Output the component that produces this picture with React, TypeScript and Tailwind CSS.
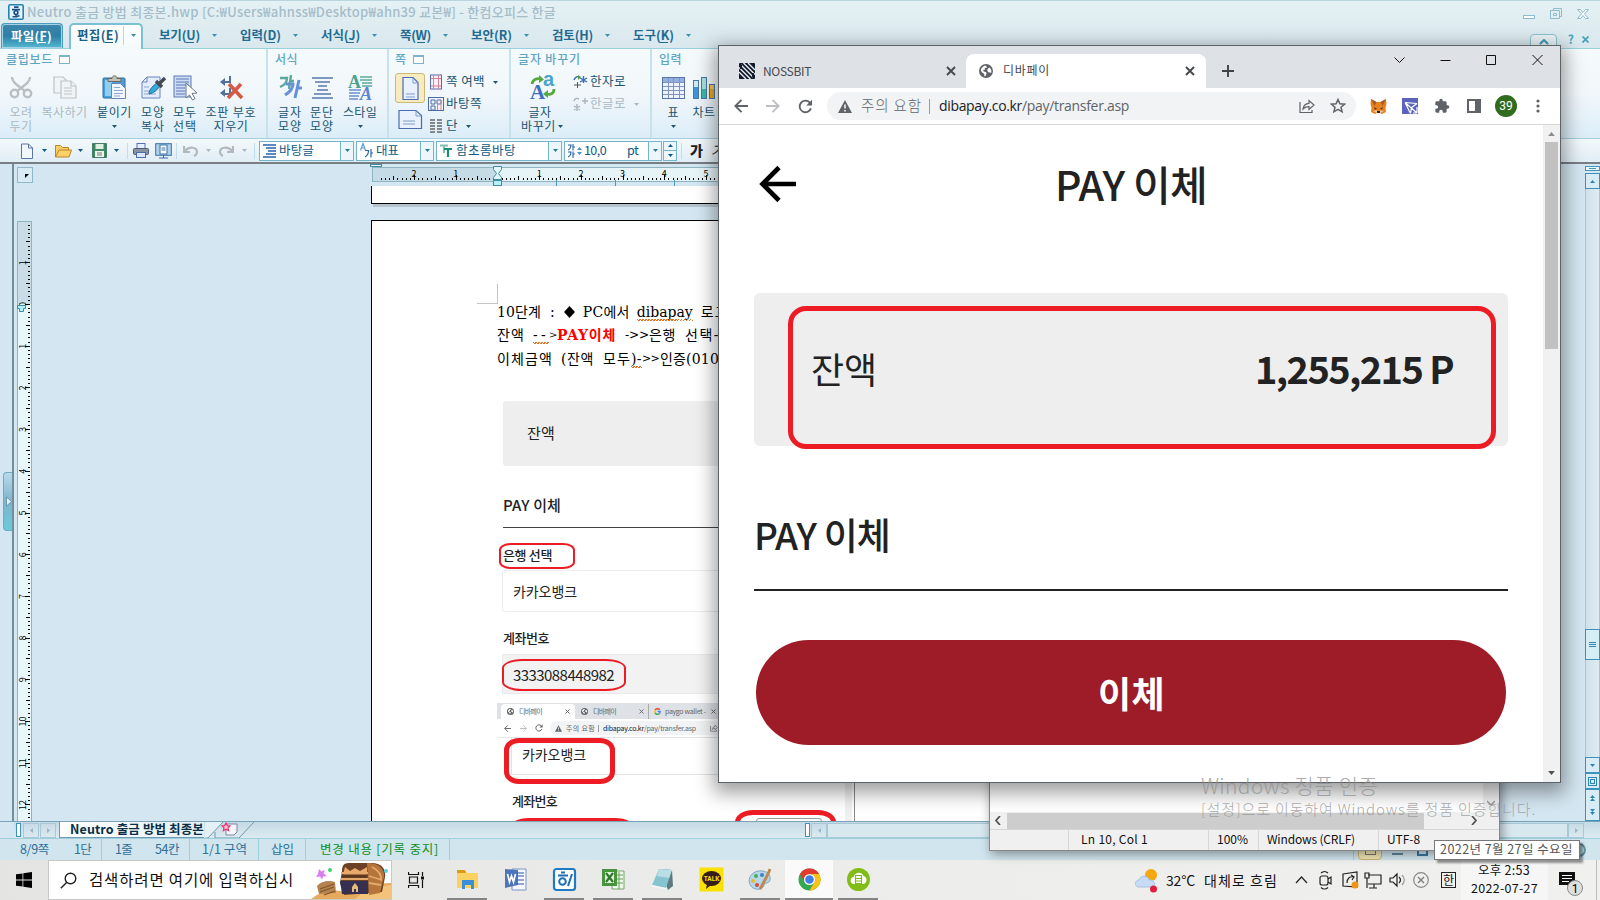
import { useLayoutEffect, useRef, type ReactNode } from "react";

/* Text spread over an exact width by adjusting its tracking. */
function Fit({ w, children, className = "" }: { w: number; children: string; className?: string }) {
  const ref = useRef<HTMLSpanElement>(null);
  useLayoutEffect(() => {
    const el = ref.current;
    if (!el) return;
    el.style.letterSpacing = "0px";
    const natural = el.getBoundingClientRect().width;
    el.style.letterSpacing = `${(w - natural) / Math.max(1, children.length)}px`;
  }, [w, children]);
  return (
    <span className={`block shrink-0 whitespace-pre ${className}`} style={{ width: w }}>
      <span ref={ref} className="inline-block whitespace-pre">{children}</span>
    </span>
  );
}

function Down({ className = "" }: { className?: string }) {
  return (
    <svg className={`h-[3px] w-[5px] shrink-0 ${className}`} viewBox="0 0 5 3" fill="currentColor">
      <path d="M0 0h5L2.5 3z" />
    </svg>
  );
}

function Gap({ className }: { className: string }) {
  return <div className={`shrink-0 ${className}`} />;
}

function HwpLogo({ className = "" }: { className?: string }) {
  return (
    <svg className={className} viewBox="0 0 16 16">
      <rect x="0.8" y="0.8" width="14.4" height="14.4" rx="1.5" fill="#e6f5fb" stroke="#2580b4" strokeWidth="1.6" />
      <path d="M6 3.200h4.500M4 5.600h8" stroke="#1a4f8c" strokeWidth="1.700" />
      <circle cx="8" cy="8.600" r="1.900" fill="none" stroke="#1a4f8c" strokeWidth="1.600" />
      <path d="M8 10.500v2M4.500 12.800h4l3-1.300" stroke="#1a4f8c" strokeWidth="1.500" fill="none" />
    </svg>
  );
}

const menus = [
  { t: "보기(U)", w: 41, cell: "w-[81px]" },
  { t: "입력(D)", w: 41, cell: "w-[81px]" },
  { t: "서식(J)", w: 39, cell: "w-[79px]" },
  { t: "쪽(W)", w: 31, cell: "w-[71px]" },
  { t: "보안(R)", w: 41, cell: "w-[81px]" },
  { t: "검토(H)", w: 41, cell: "w-[81px]" },
  { t: "도구(K)", w: 41, cell: "w-[81px]" },
];

function MenuText({ t, w, className = "" }: { t: string; w: number; className?: string }) {
  return (
    <span className={`relative block shrink-0 text-[12.5px] font-bold ${className}`}>
      <Fit w={w}>{t}</Fit>
      <span className="absolute right-[6px] bottom-[-1px] h-px w-[8px] bg-current" />
    </span>
  );
}

function TitleBar() {
  return (
    <div className="flex h-[23px] shrink-0 items-center border-t border-[#b9d6e0] bg-gradient-to-b from-[#e4f1f5] to-[#dfedf1] pl-[8px] leading-none">
      <HwpLogo className="size-[16px] shrink-0" />
      <Fit w={529} className="mb-[2px] ml-[3px] text-[13px] font-medium text-[#a5bdc9]">
        Neutro 출금 방법 최종본.hwp [C:₩Users₩ahnss₩Desktop₩ahn39 교본₩] - 한컴오피스 한글
      </Fit>
      <svg className="mt-[6px] mr-[11px] ml-auto h-[14px] w-[66px]" viewBox="0 0 66 14" fill="none" stroke="#8fbccc" strokeWidth="1">
        <rect x="0.5" y="7.5" width="11" height="3" fill="#fff" />
        <path d="M30.500 2.500v-2h8v8h-2M27.500 2.500h9v8h-9zM30.500 5.500h3v2h-3z" />
        <path d="M54.500 1.500h3l2.500 3 2.500-3h3l-4 4.500 4 4.500h-3l-2.500-3-2.500 3h-3l4-4.500z" fill="#fff" />
      </svg>
    </div>
  );
}

function MenuBar() {
  return (
    <div className="flex h-[26px] shrink-0 items-stretch border-b border-[#9bd0e0] bg-gradient-to-b from-[#dfedf1] to-[#d9e8ee] leading-none">
      <div className="ml-px flex w-[62px] items-center rounded-t-[4px] border border-b-0 border-[#4c9dbd] bg-gradient-to-b from-[#3f86ab] via-[#2b7fa8] to-[#57b9d2] pl-[9px] shadow-[inset_0_0_0_1px_#a3d3e4]">
        <MenuText t="파일(F)" w={41} className="text-white" />
      </div>
      <div className="-mb-px ml-[6px] flex w-[74px] items-center rounded-t-[5px] border-2 border-b-0 border-[#7cc0d4] bg-gradient-to-b from-white to-[#f3fafc] pb-[3px] pl-[6px] text-[#1c5f86]">
        <MenuText t="편집(E)" w={42} />
        <div className="ml-[4px] h-[19px] w-px bg-[#b5d9e5]" />
        <Down className="ml-[7px] text-[#3e8fae]" />
      </div>
      <Gap className="w-[16px]" />
      {menus.map((m) => (
        <div key={m.t} className={`flex items-center ${m.cell} text-[#236a92]`}>
          <MenuText t={m.t} w={m.w} />
          <Down className="ml-[12px] text-[#3e8fae]" />
        </div>
      ))}
      <div className="mt-[11px] ml-auto h-[18px] w-[27px] rounded-t-[4px] border border-[#8cc0cf] bg-[#e9f4f7] px-[8px] pt-[4px]">
        <svg className="h-[6px] w-[10px]" viewBox="0 0 10 6"><path d="M1 5l4-4 4 4" fill="none" stroke="#3e9ab5" strokeWidth="2" /></svg>
      </div>
      <span className="mt-[10px] ml-[11px] text-[12px] font-bold text-[#4aa3bd]">?</span>
      <svg className="mt-[13px] mr-[11px] ml-[8px] size-[7px]" viewBox="0 0 7 7"><path d="M.5.500l6 6M6.500.500l-6 6" stroke="#4aa3bd" strokeWidth="1.800" /></svg>
    </div>
  );
}

/* ---------- ribbon ---------- */

const page = (c: string, f: string) => (
  <path d="M5 1.500h10l5 5v17H5z" fill={f} stroke={c} strokeWidth="1.200" />
);

const icons: Record<string, ReactNode> = {
  cut: (
    <g fill="none" stroke="#b9bfc2" strokeWidth="2.400">
      <path d="M3 2c0 5 5 8 13 14M21 2c0 5-5 8-13 14" />
      <circle cx="5.500" cy="18.500" r="3.700" /><circle cx="18.500" cy="18.500" r="3.700" />
    </g>
  ),
  copy: (
    <g fill="#f1f4f6" stroke="#bcc3c7" strokeWidth="1.200">
      <path d="M2 2h9l3 3v13H2z" /><path d="M9 6h10l5 5v12H9z" />
      <path d="M12 13h8M12 16h8M12 19h8M19 6v5h5" />
    </g>
  ),
  paste: (
    <g>
      <rect x="1" y="3" width="22" height="20" rx="1" fill="#4a9fd6" stroke="#2b6fa6" />
      <rect x="3" y="5" width="7" height="16" fill="#8fd0f2" />
      <path d="M6 6.500V3.500h4c0-3.500 5-3.500 5 0h4v3z" fill="#c5c0b6" stroke="#6c675d" />
      <path d="M9.500 8.500h9l5 5v10h-14z" fill="#f2f7ff" stroke="#6d83b5" />
      <path d="M12 12.500h6M12 15.500h9M12 18.500h9M12 21h6" stroke="#8fa5cf" />
    </g>
  ),
  brush: (
    <g>
      <path d="M6 2h13v21H1V7z" fill="#e3edfb" stroke="#6a83bd" /><path d="M6 2v5H1" fill="none" stroke="#6a83bd" />
      <path d="M3 19h12M3 16h6M3 12h5" stroke="#8fa5cf" />
      <path d="M8 19c0-5 5-9 8-11l3 3c-3 4-6 7-11 8z" fill="#36a9da" stroke="#1c6c9c" />
      <path d="M15 6l6 6M18 9l6-6" stroke="#444b52" strokeWidth="3.400" />
    </g>
  ),
  select: (
    <g>
      <rect x="1" y="1" width="17" height="21" fill="#cddbf3" stroke="#5d78b6" />
      <path d="M3 4h13M3 7h13M3 10h13M3 13h9M3 16h9M3 19h9" stroke="#5d78b6" />
      <path d="M13 8l11 10-5 .5 3 5-2.500 1.500-3-5-3.500 3z" fill="#fff" stroke="#6b7688" />
    </g>
  ),
  marks: (
    <g fill="none">
      <path d="M11 1v6H4M11 13v6H4" stroke="#52709f" strokeWidth="2" />
      <path d="M6 3L1 7l5 4zM6 14l-5 4 5 4z" fill="#52709f" />
      <path d="M10 9l13 14M22 9L9 23" stroke="#d55a45" strokeWidth="3.600" />
    </g>
  ),
  charshape: (
    <g fill="none">
      <path d="M2 3h7c0 4-2 7-7 9M13 0l-2 14M12 6h4" stroke="#5ba99b" strokeWidth="2.400" />
      <path d="M8 9h7c0 5-3 8-8 11M21 5l-4 18M20 13h4" stroke="#6792d8" strokeWidth="3" />
    </g>
  ),
  para: <path d="M2 3h21M5 7h15M8 11h9M7 15h11M4 19h17M2 23h21" stroke="#5878ac" strokeWidth="1.500" />,
  style: (
    <g>
      <path d="M12 2h12M12 5h12M14 8h10M14 11h10" stroke="#5ba99b" strokeWidth="1.300" />
      <path d="M1 15h12M1 18h11M1 21h10M1 24h9" stroke="#6a8fd0" strokeWidth="1.300" />
      <g fontWeight="bold" fontFamily="Liberation Serif"><text x="0" y="13" fontSize="18" fill="#4da08e">A</text><text x="12" y="25" fontSize="18" fill="#5c83d0" fontStyle="italic">A</text></g>
    </g>
  ),
  change: (
    <g>
      <text x="13" y="11" fontSize="20" fontWeight="bold" fontFamily="Liberation Sans" fill="#4aa6cd">a</text>
      <text x="0" y="24" fontSize="21" fontWeight="bold" fontFamily="Liberation Serif" fill="#3c6fc0">A</text>
      <path d="M2 9c1-5 5-6 9-5M24 14c0 5-4 6-7 5" fill="none" stroke="#58a942" strokeWidth="2.800" />
      <path d="M9 0l5 4.500L9 8zM18 15v8l-5-4z" fill="#58a942" />
    </g>
  ),
  table: (
    <g>
      <rect x="1.500" y="2.500" width="22" height="21" fill="#eef3fb" stroke="#5a74a8" />
      <rect x="2" y="3" width="21" height="4" fill="#91afe0" />
      <path d="M2 7.500h21M2 11.500h21M2 15.500h21M2 19.500h21M7.500 3v20M12.500 3v20M18.500 3v20" stroke="#7f94bf" />
    </g>
  ),
  chart: (
    <g strokeWidth="1" stroke="#4a78a8">
      <rect x="1.500" y="5.500" width="5" height="18" fill="#cfeaf8" /><rect x="2" y="12" width="4" height="11" fill="#3f95d8" stroke="none" />
      <rect x="9.500" y="2.500" width="5" height="21" fill="#a8e0da" /><rect x="10" y="14" width="4" height="9" fill="#3bbba6" stroke="none" />
      <rect x="17.500" y="9.500" width="5" height="14" fill="#f6c95a" /><rect x="18" y="14" width="4" height="9" fill="#eba81c" stroke="none" />
    </g>
  ),
};

function Ico({ name, className = "size-[25px]" }: { name: string; className?: string }) {
  return <svg className={`shrink-0 overflow-visible ${className}`} viewBox="0 0 25 25">{icons[name]}</svg>;
}

function Col({ name, l1, w1, l2, w2 = 0, cell, dim }: { name: string; l1: string; w1: number; l2?: string; w2?: number; cell: string; dim?: boolean }) {
  return (
    <div className={`flex shrink-0 flex-col items-center text-[12px] leading-[14px] ${cell} ${dim ? "text-[#a9bac3]" : "text-[#205470]"}`}>
      <Ico name={name} />
      <Fit w={w1} className="mt-[5px]">{l1}</Fit>
      {l2 ? <Fit w={w2}>{l2}</Fit> : dim ? null : <Down className="mt-[6px]" />}
    </div>
  );
}

function WinGlyph() {
  return <span className="ml-[6px] block h-[9px] w-[11px] border border-t-2 border-[#7ab3cb] bg-white" />;
}

function Group({ title, w, win, cell, children }: { title: string; w: number; win?: boolean; cell: string; children: ReactNode }) {
  return (
    <div className={`flex shrink-0 flex-col border-r-2 border-[#c8e2ec] leading-none ${cell}`}>
      <div className="flex h-[20px] items-center text-[12px] font-medium text-[#5fa6c3]">
        <Fit w={w}>{title}</Fit>
        {win && <WinGlyph />}
      </div>
      <div className="flex pt-[6px]">{children}</div>
    </div>
  );
}

function Small({ icon, t, w, arrow, dim }: { icon: ReactNode; t: string; w: number; arrow?: boolean; dim?: boolean }) {
  return (
    <div className={`flex h-[22px] items-center text-[12.5px] ${dim ? "text-[#a9bac3]" : "text-[#205470]"}`}>
      <svg className="h-[16px] w-[16px] shrink-0" viewBox="0 0 16 16">{icon}</svg>
      <Fit w={w} className="mb-[2px] ml-[2px]">{t}</Fit>
      {arrow && <Down className="ml-[8px]" />}
    </div>
  );
}

function Ribbon() {
  return (
    <div className="flex h-[90px] shrink-0 border-b border-[#a4cfdf] bg-gradient-to-b from-[#f5fafc] via-[#f2f7fb] to-[#dcedf8]">
      <Group title="클립보드" w={47} win cell="w-[268px] pl-[6px]">
        <Col name="cut" l1="오려" w1={23} l2="두기" w2={23} cell="w-[30px]" dim />
        <Col name="copy" l1="복사하기" w1={46} cell="w-[57px]" dim />
        <Col name="paste" l1="붙이기" w1={35} cell="w-[43px]" />
        <Col name="brush" l1="모양" w1={24} l2="복사" w2={24} cell="w-[34px]" />
        <Col name="select" l1="모두" w1={24} l2="선택" w2={24} cell="w-[30px]" />
        <Col name="marks" l1="조판 부호" w1={51} l2="지우기" w2={35} cell="w-[62px]" />
      </Group>
      <Group title="서식" w={23} cell="w-[121px] pl-[7px]">
        <Col name="charshape" l1="글자" w1={24} l2="모양" w2={24} cell="w-[30px]" />
        <Col name="para" l1="문단" w1={24} l2="모양" w2={24} cell="w-[34px]" />
        <Col name="style" l1="스타일" w1={34} cell="w-[42px]" />
      </Group>
      <Group title="쪽" w={12} win cell="w-[122px] pl-[6px]">
        <div className="-mt-[2px] flex w-[30px] flex-col items-center">
          <div className="flex h-[30px] w-[30px] items-center justify-center rounded-[3px] border border-[#cbb878] bg-[#f7ecc0]">
            <svg className="size-[25px]" viewBox="0 0 25 25">{page("#4b6cb0", "#e8f1fd")}<path d="M8 18h9M8 21h9M15 2v5h5" stroke="#7f9bd0" fill="none" /></svg>
          </div>
          <svg className="mt-[6px] h-[22px] w-[25px]" viewBox="0 0 25 22"><path d="M1 1.500h17l5.500 5v13H1z" fill="#e8f1fd" stroke="#4b6cb0" strokeWidth="1.200" /><path d="M5 12h12M5 15h12M18 2v5h5" stroke="#7f9bd0" fill="none" /></svg>
        </div>
        <div className="-mt-[4px] ml-[3px] flex flex-col">
          <Small icon={<><rect x="2.500" y="1" width="11" height="14" fill="#f7eef6" stroke="#5a6ca8" /><path d="M5.500 1v14M10.500 1v14M3 4.500h10M3 12h10" stroke="#d68196" /></>} t="쪽 여백" w={39} arrow />
          <Small icon={<g fill="none"><rect x="0.500" y="1.500" width="15" height="13" stroke="#4c6ca8" fill="#eef3fb" /><path d="M3 4h4v4H3zM9 4h4v4H9zM3 10h4v4H3z" stroke="#4c6ca8" /><path d="M9.500 4v10M13 4v10" stroke="#d88" /></g>} t="바탕쪽" w={36} />
          <Small icon={<path d="M2 2h5M9 2h5M2 5h5M9 5h5M2 8h5M9 8h5M2 11h5M9 11h5M2 14h5M9 14h5" stroke="#666" strokeWidth="1.500" />} t="단" w={12} arrow />
        </div>
      </Group>
      <Group title="글자 바꾸기" w={63} cell="w-[141px] pl-[7px]">
        <div className="flex w-[48px] flex-col items-center text-[12px] leading-[14px] text-[#205470]">
          <Ico name="change" />
          <Fit w={23} className="mt-[5px] mr-[4px]">글자</Fit>
          <div className="flex items-center"><Fit w={35}>바꾸기</Fit><Down className="ml-[2px]" /></div>
        </div>
        <div className="-mt-[4px] ml-[6px]">
          <Small icon={<g><path d="M2 6c1-3 3-4 6-3M11.500 2v7M8 4l7 4M15 4l-7 4" stroke="#3d6cb8" strokeWidth="1.400" fill="none" /><path d="M2 11h7M5.500 8v6" stroke="#555" /><path d="M6 1l3 2-3 3z" fill="#4e9c3c" /></g>} t="한자로" w={36} />
          <Small dim icon={<g stroke="#adb6bb" strokeWidth="1.400"><path d="M10 5h6M13 2v6M5 8v7M2 10l6 4M8 10l-6 4M2 5c1-3 3-3 5-2" fill="none" /></g>} t="한글로" w={36} arrow />
        </div>
      </Group>
      <Group title="입력" w={23} cell="w-[900px] pl-[7px]">
        <Col name="table" l1="표" w1={11} cell="w-[28px]" />
        <div className="ml-[3px] flex w-[28px] flex-col items-center text-[12px] leading-[14px] text-[#205470]">
          <Ico name="chart" /><Fit w={23} className="mt-[5px]">차트</Fit>
        </div>
      </Group>
    </div>
  );
}

function Combo({ cell, children, text }: { cell: string; text?: ReactNode; children?: ReactNode }) {
  return (
    <div className={`mr-[2px] flex h-[20px] shrink-0 items-center border border-[#72b5cb] bg-white ${cell}`}>
      {children}
      {text}
      <div className="ml-auto flex h-full w-[13px] items-center justify-center border-l border-[#72b5cb] bg-[#edf7fb] text-[#2a7ba0]"><Down /></div>
    </div>
  );
}

function Toolbar() {
  return (
    <div className="flex h-[25px] shrink-0 items-center border-b-2 border-[#777e84] bg-gradient-to-b from-[#f3f9fc] to-[#e0eef5] text-[12.5px] leading-none text-[#0d5a86]">
      <svg className="ml-[21px] h-[16px] w-[12px]" viewBox="0 0 12 16"><path d="M.5 1h7l4 4v10.500H.5z" fill="#f2f7ff" stroke="#5a74a8" /><path d="M7.500 1v4h4" fill="none" stroke="#5a74a8" /></svg>
      <Down className="ml-[9px]" />
      <svg className="ml-[8px] h-[14px] w-[17px]" viewBox="0 0 17 14"><path d="M.5 13V1.500h5l2 2h6V6" fill="#f9d068" stroke="#b98525" /><path d="M.5 13L4 6h12.500L14 13z" fill="#fbd067" stroke="#b98525" /></svg>
      <Down className="ml-[6px]" />
      <svg className="ml-[9px] h-[15px] w-[15px]" viewBox="0 0 15 15"><rect x=".7" y=".7" width="13.600" height="13.600" fill="#3d8a65" stroke="#2c6b4c" /><rect x="3.500" y="1" width="8" height="5" fill="#dfeee3" /><rect x="3" y="8" width="9" height="6" fill="#eef5ee" /><path d="M5 10h5M5 12h5" stroke="#777" /></svg>
      <Down className="ml-[7px]" />
      <div className="ml-[8px] h-[16px] w-px bg-[#c2dfe9]" />
      <svg className="ml-[5px] h-[15px] w-[16px]" viewBox="0 0 16 15"><rect x="4" y=".5" width="8" height="6" fill="#e7f0ff" stroke="#5671ad" /><rect x=".5" y="5.500" width="15" height="6" rx="1" fill="#8b93a3" stroke="#4f5c79" /><rect x="3.500" y="9.500" width="9" height="5" fill="#dbe7ff" stroke="#4d69a6" /></svg>
      <svg className="ml-[6px] h-[16px] w-[17px]" viewBox="0 0 17 16"><rect x=".7" y=".7" width="15.600" height="11.600" fill="#acd2ee" stroke="#3d6fa5" /><rect x="5" y="2" width="7" height="9" fill="#fff" stroke="#3d6fa5" /><path d="M6.500 5h4M6.500 7h4M4 15h9M8.500 12v3" stroke="#3d6fa5" /></svg>
      <div className="ml-[4px] h-[16px] w-px bg-[#c2dfe9]" />
      <svg className="ml-[6px] h-[13px] w-[16px]" viewBox="0 0 16 13"><path d="M1 2v6h6M2 7c4-5 12-4 12 1 0 2-1 3-3 4" fill="none" stroke="#b0bac0" strokeWidth="2.200" /></svg>
      <Down className="ml-[7px] text-[#a9bac3]" />
      <svg className="ml-[7px] h-[13px] w-[16px]" viewBox="0 0 16 13"><path d="M15 2v6H9M14 7C10 2 2 3 2 8c0 2 1 3 3 4" fill="none" stroke="#b0bac0" strokeWidth="2.200" /></svg>
      <Down className="ml-[8px] text-[#a9bac3]" />
      <div className="mr-[4px] ml-[7px] h-[16px] w-px bg-[#c2dfe9]" />
      <Combo cell="w-[95px]" text={<Fit w={35} className="ml-[3px]">바탕글</Fit>}>
        <svg className="ml-[3px] h-[14px] w-[13px]" viewBox="0 0 13 14"><path d="M0 1h13M3 4h10M5 7h8M3 10h10M0 13h13" stroke="#2863ae" strokeWidth="1.300" /></svg>
      </Combo>
      <Combo cell="w-[78px]" text={<Fit w={23} className="ml-[3px]">대표</Fit>}>
        <svg className="ml-[3px] h-[15px] w-[13px] overflow-visible" viewBox="0 0 13 15"><path d="M.5 7.500l2.500-7 2.500 7M1.500 5h3" fill="none" stroke="#5d9edc" strokeWidth="1.200" /><path d="M5 7.500h3.500c0 3-1 5-3.500 6.500M11 6v8.500M11 10h2" fill="none" stroke="#2863ae" strokeWidth="1.200" /></svg>
      </Combo>
      <Combo cell="w-[126px]" text={<Fit w={60} className="ml-[4px]">함초롬바탕</Fit>}>
        <svg className="ml-[3px] h-[14px] w-[12px]" viewBox="0 0 12 14"><path d="M0 1.500h8M4 1v8" stroke="#7fc0ad" strokeWidth="2" /><path d="M4 5h8M8 5v8" stroke="#1d8a78" strokeWidth="2.200" /></svg>
      </Combo>
      <Combo cell="w-[98px]" text={<><Fit w={22} className="ml-[2px]">10,0</Fit><Fit w={11} className="ml-[21px]">pt</Fit></>}>
        <svg className="ml-[3px] h-[14px] w-[14px]" viewBox="0 0 14 14"><path d="M0 1h3c0 2-1 4-3 5M5 0v6.500M5 3h2M0 8h3c0 2-1 4-3 5M5 7.500V14M5 10h2" fill="none" stroke="#2863ae" strokeWidth="1.100" /><path d="M9 6l2.500-3L14 6zM9 8h5l-2.500 3z" fill="#4d94c8" /></svg>
      </Combo>
      <div className="-ml-px flex h-[20px] w-[14px] flex-col border border-[#72b5cb] bg-[#edf7fb]">
        <div className="flex flex-1 items-center justify-center"><Down className="rotate-180" /></div>
        <div className="flex flex-1 items-center justify-center border-t border-[#72b5cb]"><Down /></div>
      </div>
      <div className="ml-[4px] h-[16px] w-px bg-[#c2dfe9]" />
      <span className="mb-[2px] ml-[8px] text-[14px] font-black text-[#222]">가</span>
      <span className="mb-[2px] ml-[8px] text-[14px] text-[#222] italic">가</span>
    </div>
  );
}

/* ---------- rulers ---------- */

function HRuler() {
  const ticks: number[] = [];
  for (let i = -28; i <= 54; i++) ticks.push(i);
  return (
    <svg className="block h-[22px] w-[350px]" viewBox="370 164 350 22">
      <rect x="372.500" y="167.500" width="400" height="14" fill="#e6f4f8" stroke="#8db6c0" />
      <rect x="373" y="168" width="124" height="13" fill="#c5dbe6" />
      {ticks.map((i) => {
        const x = Math.round(497.500 + i * 4.170) + 0.500;
        const h = i % 10 === 0 ? 5 : i % 5 === 0 ? 4 : 2;
        return <path key={i} d={`M${x} ${180 - h}V180`} stroke="#000" />;
      })}
      {[[-2, "2"], [-1, "1"], [1, "1"], [2, "2"], [3, "3"], [4, "4"], [5, "5"]].map(([n, t]) => (
        <text key={n} x={497.500 + Number(n) * 41.700} y="177" fontSize="9" textAnchor="middle">{t}</text>
      ))}
      <path d="M556.500 180v6M615.500 180v6M674.500 180v6" stroke="#4a9abb" />
      <path d="M493.500 166.500h8v3l-3 4 3 4v2h-8v-2l3-4-3-4z" fill="#dff6fa" stroke="#3f8ba3" />
      <rect x="493.500" y="180.500" width="8" height="5" fill="#b5f0f5" stroke="#3f8ba3" />
      <rect x="370.500" y="164.500" width="11" height="2" fill="#eef9fb" stroke="#3f8ba3" />
    </svg>
  );
}

function VRuler() {
  const ticks: number[] = [];
  for (let i = -19; i <= 123; i++) ticks.push(i);
  const nums = [-1, 0, 1, 2, 3, 4, 5, 6, 7, 8, 9, 10, 11, 12];
  return (
    <svg className="block h-[600px] w-[16px]" viewBox="17 221 16 600">
      <rect x="17.500" y="221.500" width="14" height="610" fill="#eaf7fa" stroke="#8db6c0" />
      <rect x="18" y="222" width="13" height="82" fill="#cadde7" />
      {ticks.map((i) => {
        const y = Math.round(304 + i * 4.170) + 0.500;
        const w = i % 10 === 0 ? 5 : i % 5 === 0 ? 4 : 2;
        return <path key={i} d={`M${30 - w} ${y}H30`} stroke="#000" />;
      })}
      {nums.map((n) => (
        <text key={n} fontSize="9" textAnchor="middle" transform={`translate(26 ${304.500 + n * 41.700}) rotate(-90)`}>{Math.abs(n)}</text>
      ))}
      <path d="M17.500 305.500h8v3h-2v3h-4v-3h-2z" fill="#b5f0f5" stroke="#3f8ba3" />
    </svg>
  );
}

/* ---------- document ---------- */

function Globe({ className = "" }: { className?: string }) {
  return (
    <svg className={`shrink-0 ${className}`} viewBox="0 0 24 24">
      <circle cx="12" cy="12" r="12" fill="#5f6368" />
      <path d="M3 11c1-4 3-6 6-8h3l2 3-4 1v3H7l1 3 4 .5 1 3-2 4.500-2-.5v-3.500L5 14zM15 8l3-2c3 3 4 6 3 9l-5-1-2-3z" fill="#fff" />
    </svg>
  );
}

function Reload({ className = "" }: { className?: string }) {
  return (
    <svg className={`shrink-0 ${className}`} viewBox="0 0 16 16" fill="none" stroke="#5f6368" strokeWidth="2">
      <path d="M13.800 10A6.200 6.200 0 1 1 12.500 3.700L14 5.200" /><path d="M15 .8V7H8.800z" fill="#5f6368" stroke="none" />
    </svg>
  );
}

function Warn({ className = "" }: { className?: string }) {
  return <svg className={`shrink-0 ${className}`} viewBox="0 0 14 13"><path d="M7 0l7 13H0z" fill="#5f6368" /><path d="M7 4.500v4M7 10v1.500" stroke="#fff" strokeWidth="1.500" /></svg>;
}

function Arrow({ className = "", flip }: { className?: string; flip?: boolean }) {
  return (
    <svg className={`shrink-0 ${flip ? "-scale-x-100" : ""} ${className}`} viewBox="0 0 14 14" fill="none" stroke="currentColor" strokeWidth="1.900">
      <path d="M14 7H1.500M7.500.8L1.300 7l6.200 6.200" />
    </svg>
  );
}

function Share({ className = "" }: { className?: string }) {
  return (
    <svg className={`shrink-0 ${className}`} viewBox="0 0 16 16" fill="none" stroke="#5f6368" strokeWidth="1.200">
      <path d="M1 4v10.500h12V12" /><path d="M4 11c.5-4 3-5.500 6-5.700V2.500l5 4.500-5 4.500V8.700C7.500 8.700 5.500 9.500 4 11z" />
    </svg>
  );
}

function Cross({ className = "" }: { className?: string }) {
  return <svg className={`shrink-0 ${className}`} viewBox="0 0 10 10"><path d="M1 1l8 8M9 1L1 9" stroke="currentColor" strokeWidth="1.900" fill="none" /></svg>;
}

function RedBox({ className }: { className: string }) {
  return <div className={`absolute border-[#ed1c24] ${className}`} />;
}

function Squiggle({ w, children, ml = "" }: { w: number; children: string; ml?: string }) {
  return (
    <span className={`relative block ${ml}`}>
      <Fit w={w}>{children}</Fit>
      <span className="absolute bottom-[-2px] left-0 h-[2px] w-full bg-[repeating-linear-gradient(135deg,#e2711d_0_1px,transparent_1px_2.1px)]" />
    </span>
  );
}

function DocPage() {
  return (
    <div className="relative h-[601px] w-[790px] overflow-hidden border-t border-l border-black bg-white leading-none text-[#222]">
      <div className="ml-[105px] h-[83px] w-[21px] pt-[63px]"><div className="h-[20px] border-r border-b border-[#c4c4c4]" /></div>
      <div className="flex flex-col gap-[8px] pl-[125px] font-['DejaVu_Serif','Noto_Sans_CJK_KR',serif] text-[14px] text-black">
        <div className="flex h-[15px] items-center">
          <Fit w={44}>10단계</Fit><span className="ml-[9px]">:</span>
          <svg className="ml-[9px] h-[12px] w-[11px]" viewBox="0 0 11 12"><path d="M5.500 0L11 6l-5.500 6L0 6z" /></svg>
          <Fit w={47} className="ml-[8px]">PC에서</Fit><Squiggle w={56} ml="ml-[7px]">dibapay</Squiggle><Fit w={28} className="ml-[8px]">로그</Fit>
        </div>
        <div className="flex h-[15px] items-center">
          <Fit w={28}>잔액</Fit><Squiggle w={16} ml="ml-[8px]">--</Squiggle><Fit w={8} className="text-[10px]">{">"}</Fit><Fit w={59} className="font-bold text-[#f00]">PAY이체</Fit>
          <Fit w={24} className="ml-[9px] text-[12px]">{"->>"}</Fit><Fit w={27}>은행</Fit><Fit w={35} className="ml-[9px]">선택-</Fit>
        </div>
        <div className="mt-px flex h-[15px] items-center">
          <Fit w={56}>이체금액</Fit><Fit w={33} className="ml-[8px]">(잔액</Fit><Fit w={28} className="ml-[9px]">모두</Fit><Squiggle w={11}>)-</Squiggle><Fit w={17} className="text-[11px]">{">>"}</Fit><Fit w={59} className="ml-px">인증(010</Fit>
        </div>
      </div>
      <div className="mt-[35px] ml-[131px] flex h-[65px] w-[350px] items-center rounded-[3px] bg-[#eee] pb-[2px] pl-[24px] text-[15px]"><Fit w={28}>잔액</Fit></div>
      <div className="mt-[31px] ml-[131px] h-[31px] w-[350px] border-b border-[#444] text-[15px] font-medium"><Fit w={58}>PAY 이체</Fit></div>
      <div className="mt-[20px] ml-[131px] text-[13px] font-medium"><Fit w={49}>은행 선택</Fit></div>
      <div className="mt-[9px] ml-[130px] flex h-[42px] w-[350px] items-center rounded-[3px] border border-[#ececec] pl-[10px] text-[14px]"><Fit w={64}>카카오뱅크</Fit></div>
      <div className="mt-[19px] ml-[131px] text-[13px] font-medium"><Fit w={46}>계좌번호</Fit></div>
      <div className="mt-[10px] ml-[130px] flex h-[40px] w-[350px] items-center border border-[#e9e9e9] bg-[#f2f2f2] pl-[10px] text-[15px]"><Fit w={101}>3333088448982</Fit></div>
      <div className="mt-[9px] ml-[125px] flex h-[16px] w-[350px] items-end bg-[#dee1e6] text-[7px] text-[#666]">
        <div className="ml-[4px] flex h-[15px] w-[74px] items-center rounded-t-[4px] bg-white pl-[6px]"><Globe className="size-[7px]" /><Fit w={23} className="ml-[5px]">디바페이</Fit><Cross className="ml-[23px] size-[5px]" /></div>
        <div className="flex h-[15px] w-[74px] items-center border-r border-[#aaa] pl-[6px]"><Globe className="size-[7px]" /><Fit w={23} className="ml-[5px]">디바페이</Fit><Cross className="ml-[23px] size-[5px]" /></div>
        <div className="flex h-[15px] items-center pl-[5px]">
          <svg className="size-[7px]" viewBox="0 0 8 8" fill="none" strokeWidth="1.600"><path d="M1.200 2.500A3.200 3.200 0 0 1 6.500 2" stroke="#ea4335" /><path d="M1.100 2.500v3" stroke="#fbbc05" /><path d="M1.200 5.500A3.200 3.200 0 0 0 6 6.500" stroke="#34a853" /><path d="M6 6.500C7 5.500 7 4.500 7 4H4" stroke="#4285f4" /></svg>
          <Fit w={42} className="ml-[4px]">paygo wallet - </Fit><Cross className="ml-[4px] size-[5px]" />
        </div>
      </div>
      <div className="ml-[126px] flex h-[19px] w-[350px] items-center border-b border-[#e4e4e4] pl-[6px] text-[7px] text-[#666]">
        <Arrow className="size-[7px]" /><Arrow flip className="ml-[9px] size-[7px] text-[#bbb]" /><Reload className="ml-[8px] size-[8px]" />
        <div className="ml-[7px] flex h-[14px] w-[200px] items-center rounded-full bg-[#f1f3f4] pl-[5px]">
          <Warn className="h-[7px] w-[7px]" /><Fit w={29} className="ml-[4px]">주의 요함</Fit><div className="mr-[4px] ml-[3px] h-[7px] w-px bg-[#999]" />
          <Fit w={41} className="text-[#222]">dibapay.co.kr</Fit><Fit w={52}>/pay/transfer.asp</Fit><Share className="ml-[14px] size-[8px]" />
        </div>
      </div>
      <div className="ml-[139px] flex h-[37px] w-[333px] items-center border-b border-l border-[#e4e4e4] pb-[4px] pl-[10px] text-[14px]"><Fit w={64}>카카오뱅크</Fit></div>
      <div className="mt-[19px] ml-[140px] text-[13px] font-medium"><Fit w={45}>계좌번호</Fit></div>
      <RedBox className="top-[322px] left-[127px] h-[26px] w-[76px] rounded-[12px/7px] border-2" />
      <RedBox className="top-[438px] left-[130px] h-[32px] w-[124px] rounded-[20px/9px] border-2" />
      <RedBox className="top-[517px] left-[132px] h-[46px] w-[111px] rounded-[15px/12px] border-[5px]" />
      <RedBox className="top-[597px] left-[137px] h-[30px] w-[126px] rounded-[20px/10px] border-[5px]" />
      <RedBox className="top-[589px] left-[363px] h-[40px] w-[101px] rounded-[18px/12px] border-[5px]" />
      <div className="absolute top-[597px] left-[384px] h-[10px] w-[66px] rounded-[3px] border border-[#999]" />
      <div className="absolute top-[100px] left-[473px] h-[501px] w-[7px] bg-[#f0f0f0]" />
      <div className="absolute top-[100px] left-[482px] h-[501px] w-px bg-[#888]" />
    </div>
  );
}

function RightScroll() {
  return (
    <div className="flex w-[15px] shrink-0 flex-col pt-[2px] text-[#2f86b5]">
      <div className="h-[5px] border border-[#4397be] bg-[#e8f6fb] px-[3px] pt-px"><div className="h-px bg-[#4397be]" /></div>
      <div className="mt-[2px] flex h-[16px] items-center justify-center border border-[#3d92bd] bg-[#d8ecf5]"><Down className="rotate-180" /></div>
      <div className="h-[440px] border-x border-[#a7c6d4] bg-gradient-to-r from-[#cfe1ea] to-[#dfecf2]" />
      <div className="flex h-[31px] flex-col items-center justify-center gap-px border border-[#3d92bd] bg-[#d5edf5]">
        <div className="h-px w-[7px] bg-current" /><div className="h-px w-[7px] bg-current" /><div className="h-px w-[7px] bg-current" />
      </div>
      <div className="h-[97px] border-x border-[#a7c6d4] bg-gradient-to-r from-[#cfe1ea] to-[#dfecf2]" />
      <div className="flex h-[16px] items-center justify-center border border-[#3d92bd] bg-[#d8ecf5]"><Down /></div>
      <div className="flex h-[16px] items-center justify-center border border-[#3d92bd] bg-[#d8ecf5]"><div className="size-[9px] border border-current p-px"><div className="size-[5px] border border-current" /></div></div>
      <div className="flex h-[32px] flex-col items-center justify-center border border-[#3d92bd] bg-[#d8ecf5]">
        <Down className="rotate-180" /><Down className="rotate-180" /><Down className="mt-[8px]" /><Down />
      </div>
    </div>
  );
}

function WorkArea() {
  return (
    <div className="flex h-[657px] shrink-0 bg-[#d4e6f1]">
      <div className="flex w-[14px] shrink-0 flex-col items-end border-r-2 border-[#728f9a]">
        <div className="mt-[308px] flex h-[59px] w-[9px] items-center justify-end rounded-l-[4px] border border-r-0 border-[#72a9c4] bg-gradient-to-b from-[#b8dbec] via-[#7fb2cf] to-[#66cbd8]">
          <svg className="h-[11px] w-[6px]" viewBox="0 0 6 11"><path d="M.5 1v9L5.500 5.500z" fill="#e2f2f8" stroke="#5d8ba0" strokeWidth=".8" /></svg>
        </div>
      </div>
      <div className="w-[356px] shrink-0 pl-[3px]">
        <div className="mt-[3px] flex size-[16px] items-center justify-center border border-[#8db9c9] bg-[#d9ebf4]"><svg className="mt-[2px] ml-[3px] size-[4px]" viewBox="0 0 4 4"><path d="M0 0h4L0 4z" /></svg></div>
        <div className="mt-[38px]"><VRuler /></div>
      </div>
      <div className="w-[1215px] shrink-0">
        <HRuler />
        <div className="ml-px h-[18px] w-[790px] border-b border-l border-black bg-white shadow-[2px_3px_0_#b5c3cc]" />
        <div className="mt-[16px] ml-px"><DocPage /></div>
      </div>
      <RightScroll />
    </div>
  );
}

function DocTabs() {
  return (
    <div className="flex h-[17px] shrink-0 items-center border-t border-[#7ba3b8] bg-gradient-to-b from-[#c5d9e4] to-[#dcebf1] leading-none">
      <Gap className="h-[17px] w-[14px] bg-[#d4e6f1]" />
      <div className="ml-[2px] h-[14px] w-[5px] border border-[#3d92bd] bg-white" />
      <div className="ml-[2px] flex h-[15px] w-[16px] items-center justify-center border border-[#a9c8d5] text-[#94b8c6]"><Down className="rotate-90" /></div>
      <div className="ml-px flex h-[15px] w-[16px] items-center justify-center border border-[#a9c8d5] text-[#94b8c6]"><Down className="-rotate-90" /></div>
      <div className="ml-[3px] flex h-[16px] items-center border-b border-l border-[#6f9bae] bg-gradient-to-r from-white to-[#e3f0f5] pl-[10px] text-[12.5px] font-bold text-[#0b2e46]"><Fit w={134}>Neutro 출금 방법 최종본</Fit></div>
      <svg className="ml-px h-[17px] w-[50px]" viewBox="0 0 50 17"><path d="M-1 16h4L18 0H-1z" fill="#e3f0f5" /><path d="M-1 16h4L18 0M10 10v6h24L49 0" fill="none" stroke="#6f9bae" /><path d="M21 2h11v8l-3 3h-8z" fill="#f6f5fa" stroke="#7b87a8" /><path d="M21 1l1.300 2.600 2.700.3-2 1.900.6 2.900L21 7.300l-2.600 1.400.6-2.900-2-1.900 2.700-.3z" fill="#fbd0de" stroke="#e8336d" strokeWidth="1.200" /></svg>
      <div className="ml-[550px] h-[14px] w-[5px] border border-[#3d92bd] bg-white" />
      <div className="ml-px flex h-[15px] w-[16px] items-center justify-center border border-[#a9c8d5] text-[#94b8c6]"><Down className="rotate-90" /></div>
      <div className="h-[15px] flex-1 border border-[#a9c8d5] bg-[#d8e8ef]" />
      <div className="mr-[16px] flex h-[15px] w-[16px] items-center justify-center border border-[#a9c8d5] text-[#94b8c6]"><Down className="-rotate-90" /></div>
    </div>
  );
}

function StatusBar() {
  const sep = "h-full w-px shrink-0 bg-[#9fd0de]";
  return (
    <div className="flex h-[22px] shrink-0 items-center border-t border-[#9fcfdd] bg-[#d1e5ee] text-[12.5px] leading-none text-[#2f6f98]">
      <Fit w={29} className="ml-[20px]">8/9쪽</Fit><Fit w={17} className="ml-[25px]">1단</Fit><div className={`ml-[10px] ${sep}`} />
      <Fit w={17} className="ml-[13px]">1줄</Fit><Fit w={24} className="ml-[23px]">54칸</Fit><div className={`ml-[10px] ${sep}`} />
      <Fit w={45} className="ml-[12px]">1/1 구역</Fit><div className={`ml-[11px] ${sep}`} />
      <Fit w={23} className="ml-[12px]">삽입</Fit><div className={`ml-[11px] ${sep}`} />
      <Fit w={119} className="ml-[14px] text-[#0b8f1f]">변경 내용 [기록 중지]</Fit><div className={`ml-[10px] ${sep}`} />
      <div className="ml-[903px] flex h-full items-center gap-[10px] border-l border-[#9fd0de] pl-[4px]">
        <div className="flex h-[20px] w-[24px] items-center justify-center rounded border border-[#c6b46f] bg-[#f3e7b5]"><div className="h-[10px] w-[11px] border border-[#777]" /></div>
        <div className="h-[10px] w-[11px] border-y-2 border-[#5d86a0]" /><div className="ml-[4px] h-[12px] w-[11px] border-2 border-[#3a77a0]" />
      </div>
      <div className="mr-[14px] ml-auto size-[14px] rounded-full border-2 border-[#66909f] bg-[#bcdce6]" />
    </div>
  );
}

/* ---------- browser window ---------- */

function Browser() {
  return (
    <div className="absolute top-[45px] left-[718px] flex h-[738px] w-[843px] flex-col border border-[#5c6266] bg-white leading-none shadow-[0_6px_18px_4px_rgba(0,0,0,0.38)]">
      <div className="flex h-[42px] shrink-0 items-end bg-[#dee1e6] text-[12px] text-[#45494d]">
        <div className="flex h-[34px] w-[247px] items-center pl-[20px]">
          <svg className="size-[16px]" viewBox="0 0 16 16"><rect width="16" height="16" rx="1" fill="#111a2c" /><path d="M0 9l7 7M0 4.500L11.500 16M2 2l12 12M4.500 0L16 11.500M9 0l7 7" stroke="#e9edf2" strokeWidth="1.400" fill="none" /><path d="M2 2l0 4M14 14v-4" stroke="#111a2c" strokeWidth="2" /></svg>
          <Fit w={48} className="mb-px ml-[8px]">NOSSBIT</Fit><Cross className="ml-[135px] size-[10px]" />
        </div>
        <div className="flex h-[34px] w-[240px] items-center rounded-t-[8px] bg-white pl-[13px]">
          <Globe className="size-[14px]" /><Fit w={47} className="mb-[2px] ml-[10px]">디바페이</Fit><Cross className="ml-[135px] size-[10px]" />
        </div>
        <svg className="mb-[11px] ml-[16px] size-[12px]" viewBox="0 0 12 12"><path d="M6 0v12M0 6h12" stroke="#3f4347" strokeWidth="1.900" /></svg>
        <svg className="mr-[17px] mb-[22px] ml-auto h-[12px] w-[149px]" viewBox="0 0 149 12" fill="none" stroke="#111"><path d="M.5 3.500l5 5 5-5M46.500 6.500h10M92.500 1.500h9v9h-9zM138.500 1l10 10M148.500 1l-10 10" /></svg>
      </div>
      <div className="flex h-[37px] shrink-0 items-center border-b border-[#d5d7da] pl-[15px] text-[14px] text-[#5f6368]">
        <Arrow className="size-[14px]" /><Arrow flip className="ml-[18px] size-[14px] text-[#bdbfc2]" /><Reload className="ml-[18px] size-[15px]" />
        <div className="ml-[14px] flex h-[28px] w-[529px] items-center rounded-full bg-[#f1f3f4] pl-[11px]">
          <Warn className="h-[13px] w-[14px]" /><Fit w={61} className="mb-px ml-[9px] text-[14.5px] font-light">주의 요함</Fit>
          <div className="mr-[9px] ml-[7px] h-[15px] w-px bg-[#9a9da0]" />
          <Fit w={83} className="font-['Open_Sans'] text-[#202124]">dibapay.co.kr</Fit><Fit w={107} className="font-['Open_Sans']">/pay/transfer.asp</Fit>
          <Share className="ml-auto size-[16px]" />
          <svg className="mr-[10px] ml-[15px] size-[16px]" viewBox="0 0 16 16"><path d="M8 1.500l1.900 4.300 4.600.4-3.500 3 1.100 4.600L8 11.400l-4.100 2.400L5 9.200l-3.500-3 4.600-.4z" fill="none" stroke="#5f6368" strokeWidth="1.500" /></svg>
        </div>
        <svg className="ml-[14px] size-[17px]" viewBox="0 0 17 17"><path d="M1 1l5.500 3h4L16 1l.5 5-1 4 .5 4-4 2-2-1H7l-2 1-4-2 .5-4-1-4z" fill="#e8821e" /><path d="M1 1l5.500 3-2 4zM16 1l-5.500 3 2 4z" fill="#a85a26" /><path d="M4 9l3 2-2 .5zM13 9l-3 2 2 .5zM7 13h3v2H7z" fill="#33271f" /><path d="M3 13l4-.5V15zM14 13l-4-.5V15z" fill="#e9cbb2" /></svg>
        <svg className="ml-[15px] size-[16px]" viewBox="0 0 16 16"><rect width="16" height="16" fill="#5c63bf" /><path d="M3 4.500l12 1M3 4.500l5.500 11M3 4.500L15 15M15 5.500L9 10M8.500 15.500l1-6M15 9v6M11 15h4" stroke="#fff" fill="none" strokeWidth="1.200" /></svg>
        <svg className="ml-[16px] size-[16px]" viewBox="0 0 24 24"><path d="M20.500 11H19V7a2 2 0 0 0-2-2h-4V3.500a2.500 2.500 0 0 0-5 0V5H4a2 2 0 0 0-2 2v3.800h1.500a2.700 2.700 0 0 1 0 5.400H2V20a2 2 0 0 0 2 2h3.800v-1.500a2.700 2.700 0 0 1 5.400 0V22H17a2 2 0 0 0 2-2v-4h1.500a2.500 2.500 0 0 0 0-5z" fill="#5f6368" /></svg>
        <div className="ml-[17px] h-[14px] w-[14px] border-2 border-r-[6px] border-[#5f6368]" />
        <div className="ml-[14px] flex size-[22px] items-center justify-center rounded-full bg-[#2f6c1e] font-['Roboto'] text-[12px] text-white">39</div>
        <svg className="ml-[19px] h-[14px] w-[4px]" viewBox="0 0 4 14" fill="#5f6368"><circle cx="2" cy="2" r="1.600" /><circle cx="2" cy="7" r="1.600" /><circle cx="2" cy="12" r="1.600" /></svg>
      </div>
      <div className="flex min-h-0 flex-1">
        <div className="w-[824px] shrink-0 px-[35px] text-[#222]">
          <div className="flex h-[117px] items-center pl-[5px]">
            <svg className="h-[38px] w-[37px]" viewBox="0 0 37 38"><path d="M37 19H4M20 2.500L3.500 19 20 35.500" fill="none" stroke="#000" strokeWidth="4.600" /></svg>
            <Fit w={152} className="mb-px ml-[259px] text-[41px] font-medium">PAY 이체</Fit>
          </div>
          <div className="relative mt-[51px] flex h-[153px] w-[754px] items-center justify-between rounded-[6px] bg-[#eee] pr-[55px] pb-[4px] pl-[57px]">
            <Fit w={66} className="text-[36px] font-normal">잔액</Fit>
            <Fit w={198} className="text-[38px] font-bold">1,255,215 P</Fit>
            <RedBox className="top-[13px] left-[34px] h-[143px] w-[708px] rounded-[18px] border-[5px]" />
          </div>
          <div className="mt-[70px] flex h-[75px] w-[754px] items-start border-b-2 border-[#222] text-[37px] font-medium"><Fit w={136}>PAY 이체</Fit></div>
          <div className="mt-[49px] ml-[2px] flex h-[105px] w-[750px] items-center justify-center rounded-full bg-[#9e1c27] pb-[2px] pl-px text-[36px] font-bold text-white"><Fit w={67}>이체</Fit></div>
        </div>
        <div className="flex w-[17px] shrink-0 flex-col items-center bg-[#f1f1f1] text-[#8c8c8c]">
          <Down className="mt-[7px] h-[4px] w-[7px] rotate-180" />
          <div className="mt-[6px] h-[207px] w-[13px] bg-[#c1c1c1]" />
          <Down className="mt-auto mb-[7px] h-[4px] w-[7px] text-[#505050]" />
        </div>
      </div>
    </div>
  );
}

function Notepad() {
  return (
    <div className="absolute top-[700px] left-[989px] flex h-[151px] w-[511px] flex-col border border-[#888] bg-white leading-none shadow-[2px_3px_10px_rgba(0,0,0,0.4)]">
      <div className="flex h-[111px] justify-end"><div className="flex w-[16px] items-end justify-center bg-[#f0f0f0] pb-[6px]"><svg className="h-[6px] w-[8px]" viewBox="0 0 8 6"><path d="M0 1l4 4 4-4" fill="none" stroke="#999" strokeWidth="1.500" /></svg></div></div>
      <div className="flex h-[17px] items-center bg-[#f0f0f0] pl-[5px]">
        <svg className="h-[9px] w-[6px]" viewBox="0 0 6 9"><path d="M5 0L1 4.500 5 9" fill="none" stroke="#555" strokeWidth="1.800" /></svg>
        <div className="ml-[6px] h-[16px] w-[417px] bg-[#cdcdcd]" />
        <svg className="ml-[47px] h-[9px] w-[6px]" viewBox="0 0 6 9"><path d="M1 0l4 4.500L1 9" fill="none" stroke="#555" strokeWidth="1.800" /></svg>
      </div>
      <div className="flex flex-1 items-center border-t border-[#d7d7d7] bg-[#f0f0f0] text-[12px] text-[#111]">
        <div className="ml-[78px] h-full w-px bg-[#d7d7d7]" /><Fit w={67} className="mb-[2px] ml-[12px]">Ln 10, Col 1</Fit>
        <div className="ml-[60px] h-full w-px bg-[#d7d7d7]" /><Fit w={31} className="mb-[2px] ml-[8px]">100%</Fit>
        <div className="ml-[10px] h-full w-px bg-[#d7d7d7]" /><Fit w={88} className="mb-[2px] ml-[8px]">Windows (CRLF)</Fit>
        <div className="ml-[23px] h-full w-px bg-[#d7d7d7]" /><Fit w={33} className="mb-[2px] ml-[8px]">UTF-8</Fit>
      </div>
    </div>
  );
}

/* ---------- taskbar ---------- */

function Task({ children, line, active, ml }: { children: ReactNode; line?: boolean; active?: boolean; ml: string }) {
  return (
    <div className={`flex h-[40px] shrink-0 flex-col items-center ${ml} ${active ? "w-[48px] bg-[#fafafa]" : "w-[40px]"}`}>
      <svg className="mt-[7px] size-[25px]" viewBox="0 0 25 25">{children}</svg>
      <div className={`mt-auto h-[2px] w-full ${line ? "bg-[#858585]" : ""}`} />
    </div>
  );
}

function Treasure() {
  return (
    <svg className="ml-auto h-[38px] w-[80px] shrink-0" viewBox="0 0 80 38">
      <path d="M0 38c12-9 20-10 36-7 16-9 30-8 44-9v16z" fill="#e5aa5e" />
      <path d="M50 33c12-5 22-9 30-9v14H44z" fill="#f3c37b" />
      <path d="M6 25c4-5 12-6 18-4l1 11-17 1z" fill="#b3824e" /><path d="M9 28l14-5M9 31l14-5M13 34l11-4" stroke="#825528" strokeWidth="1.200" />
      <path d="M31 10c0-8 4-8 8-8h21c12 0 15 7 14 14l-3 15-38 3-4-12z" fill="#6d4125" />
      <path d="M56 2c12 0 18 6 17 14l-4 16-11 2z" fill="#b6753b" /><path d="M61 6c6 3 10 8 9 14M58 15l13 4M58 22l12 2" stroke="#e2aa68" strokeWidth="1.800" fill="none" />
      <path d="M34 6l5 4 5-3 5 3 7-4v8H32z" fill="#e8a869" /><path d="M30 12h27M30 18h27" stroke="#e8a869" strokeWidth="2" /><path d="M31 13.500h25v3H31z" fill="#5c3722" />
      <path d="M29 20h28v13H31z" fill="#353052" /><path d="M41 31v-5l3-4 3 4v5h-2v-3h-2v3z" fill="#e9bb78" />
      <path d="M8 8l2.500 2.500L14 9l-1.500 3.500L16 15l-4 .5-1 3-2-3-4 .5 2-3z" fill="#d97bf2" /><circle cx="19" cy="9" r="2" fill="#3fcf73" /><circle cx="75" cy="10" r="2" fill="#5ccfe5" />
    </svg>
  );
}

function Taskbar() {
  return (
    <div className="flex h-[40px] shrink-0 bg-gradient-to-r from-[#e4e4e3] via-[#ececeb] to-[#f0f0ef] leading-none text-[#111]">
      <div className="flex w-[48px] items-center justify-center">
        <svg className="size-[16px]" viewBox="0 0 16 16"><path d="M0 2.300L6.500 1.400v6.200H0zM7.300 1.300L16 0v7.600H7.300zM0 8.400h6.500v6.200L0 13.700zM7.300 8.400H16V16l-8.700-1.300z" /></svg>
      </div>
      <div className="flex h-[40px] w-[344px] items-center border border-[#c9c9c9] bg-white pl-[11px] text-[15.500px]">
        <svg className="size-[17px] shrink-0" viewBox="0 0 17 17" fill="none" stroke="#222" strokeWidth="1.400"><circle cx="10.500" cy="6.500" r="5.300" /><path d="M6.800 10.300L.8 16.300" /></svg>
        <Fit w={205} className="mb-px ml-[12px]">검색하려면 여기에 입력하십시</Fit>
        <Treasure />
      </div>
      <div className="flex w-[48px] items-center justify-center">
        <svg className="size-[16px]" viewBox="0 0 16 16" fill="none" stroke="#111" strokeWidth="1.200"><path d="M.5 0v2.500h10V0M.5 16v-2.500h10V16M1.500 5h8v6h-8zM14.500 0v4M14.500 8v8" /><rect x="13" y="4.500" width="3" height="3" fill="#111" stroke="none" /></svg>
      </div>
      <Task ml="ml-[7px]" line><path d="M2 3h8l2 3h11v15H2z" fill="#f9d262" /><path d="M2 3h8l1 3H2z" fill="#d99a16" /><path d="M7 13h12v9h-3v-4h-6v4H7z" fill="#3a8fd8" /></Task>
      <Task ml="ml-[8px]"><path d="M9 2h14v21H9z" fill="#f5f7fc" stroke="#7b93c7" /><path d="M13 6h8M13 9h8M13 13h8M13 17h8" stroke="#6f8bc5" strokeWidth="1.500" /><path d="M2 2l13 1v15l-13 3z" fill="#3d68b5" fillOpacity=".9" /><path d="M4.500 7l2 8 2-6 2 6 2-8" stroke="#fff" strokeWidth="1.700" fill="none" /></Task>
      <Task ml="ml-[9px]" line><rect x="2" y="2" width="21" height="21" rx="2.500" fill="#fff" stroke="#1f7cc4" strokeWidth="2.200" /><path d="M9 5.500h4M6 8.500h10M16 19l4-12" stroke="#1e6fb5" strokeWidth="2" /><circle cx="10.500" cy="14.500" r="3.300" fill="none" stroke="#1e6fb5" strokeWidth="2" /></Task>
      <Task ml="ml-[9px]" line><path d="M11 4h12v18H11z" fill="#eef7ec" stroke="#75a768" /><path d="M12 8h10M12 12h10M12 16h10M18 5v17" stroke="#6aa35c" /><path d="M1 2h15v17H1z" fill="#47963d" /><path d="M4 5h9v11H4z" fill="#e4f3dd" /><path d="M5 6l7 9M12 6l-7 9" stroke="#2c7a2a" strokeWidth="2.200" /></Task>
      <Task ml="ml-[9px]" line><path d="M10 2l12 1 1 16-5 4z" fill="#5d7a80" /><path d="M9 2l13 1-6 18-14-3z" fill="#86c4cf" /><path d="M9 2l13 1-3 8-12-2z" fill="#b9dfe5" /><path d="M2 18l14 3 1 2-15-3z" fill="#f4f4f4" /></Task>
      <Task ml="ml-[9px]"><rect x=".5" y=".5" width="24" height="24" fill="#fae100" /><ellipse cx="12.500" cy="11.500" rx="9.500" ry="7.500" fill="#371d1e" /><path d="M8 17l-1 5 5-4z" fill="#371d1e" /><text x="12.500" y="14" fontSize="6.500" fontWeight="bold" textAnchor="middle" fill="#fae100" fontFamily="Roboto">TALK</text></Task>
      <Task ml="ml-[9px]" line><path d="M11 4c8-1 12 4 11 9-1 4-5 2-6 5-1 5-7 5-11 3-7-5-4-16 6-17z" fill="#b7d7ea" stroke="#7ba7c2" /><circle cx="8" cy="9" r="2" fill="#45b04c" /><circle cx="14" cy="8" r="2" fill="#3f7fd2" /><circle cx="5" cy="14" r="2" fill="#e8b82d" /><circle cx="9" cy="18" r="2" fill="#d9473f" /><path d="M22 2c-2 6-5 11-10 20" fill="none" stroke="#c2854a" strokeWidth="2.800" /></Task>
      <Task ml="ml-[5px]" line active><circle cx="12.500" cy="12.500" r="11" fill="#35a852" /><path d="M12.500 1.500a11 11 0 0 1 9.600 5.500h-9.600L7.500 15 3 7a11 11 0 0 1 9.500-5.500z" fill="#e33b2e" /><path d="M22.100 7a11 11 0 0 1-9.600 16.500L17.500 15 15 7z" fill="#fbc116" /><circle cx="12.500" cy="12.500" r="5.500" fill="#fff" /><circle cx="12.500" cy="12.500" r="4.300" fill="#3f7fe8" /></Task>
      <Task ml="ml-[5px]" line><circle cx="12.500" cy="12.500" r="11.500" fill="#82bc16" /><path d="M5.500 16c-2-3 0-6 2-6 2-6 9-5 10-1 4 1 4 7 0 8H7z" fill="#fff" /><path d="M9.500 8.500h6v8h-6zM10 11.500h5M10 14h5" stroke="#82bc16" fill="none" strokeWidth="1.200" /></Task>
      <svg className="mt-[8px] ml-auto h-[25px] w-[24px] shrink-0" viewBox="0 0 24 25"><circle cx="16" cy="7" r="6" fill="#f5a70f" /><path d="M3 19c-4-1-3-7 1-7 1-5 9-5 10 0 5-1 8 6 3 7z" fill="#c7dcf4" stroke="#a5c2e6" /><circle cx="18.500" cy="21" r="3.500" fill="#e01d3c" /></svg>
      <div className="flex w-[115px] shrink-0 items-center text-[14px]"><Fit w={29} className="mb-px ml-[7px]">32°C</Fit><Fit w={74} className="mb-px ml-[9px]">대체로 흐림</Fit></div>
      <svg className="mt-[10px] ml-[21px] h-[20px] w-[138px] shrink-0" viewBox="0 0 138 20" fill="none" stroke="#222" strokeWidth="1.200">
        <path d="M1 13l5.500-6 5.500 6" />
        <rect x="25" y="6" width="8" height="9" rx="2" /><path d="M33 9l3-2v7l-3-2M26 3c2-2 5-2 7 0M26 17.500c2 2 5 2 7 0" />
        <path d="M48 4l14-2v15l-14-1zM52 13c0-5 3-7 7-6M56 5l3 2-2 3" /><circle cx="60" cy="15" r="3.500" fill="#f39314" stroke="none" />
        <path d="M73 5h13v9H73M70 3h4v5h-4zM74 18h8M79 14v4M72 8v10" />
        <path d="M95 8h3l4-4v12l-4-4h-3zM104 7c2 2 2 4 0 6" /><path d="M107 5c3 3 3 7 0 10" stroke="#999" />
        <circle cx="126" cy="10" r="7.300" stroke="#888" /><path d="M123 7l6 6M129 7l-6 6" stroke="#777" />
      </svg>
      <div className="mt-[12px] ml-[8px] flex h-[16px] w-[15px] shrink-0 items-center justify-center border border-[#222] pb-px text-[12px]">한</div>
      <div className="ml-[5px] flex w-[87px] shrink-0 flex-col items-center gap-[5px] bg-[#f6f6f6] pt-[4px] text-[12.500px]"><Fit w={52} className="mr-px">오후 2:53</Fit><Fit w={67}>2022-07-27</Fit></div>
      <div className="flex w-[48px] shrink-0 pt-[11px] pl-[11px]">
        <svg className="h-[26px] w-[25px]" viewBox="0 0 25 26"><path d="M0 1h16v13h-4v3l-4-3H0z" fill="#111" /><path d="M3 4.500h10M3 7.500h10M3 10.500h7" stroke="#fff" strokeWidth="1.200" /><circle cx="16" cy="17" r="7.500" fill="#dedede" stroke="#888" /><text x="16" y="21.500" fontSize="12" textAnchor="middle" fontFamily="Roboto">1</text></svg>
      </div>
      <div className="h-[40px] w-[4px] shrink-0 border-l border-[#bdbdbd]" />
    </div>
  );
}

export default function App() {
  return (
    <div className="relative flex h-[900px] w-[1600px] flex-col overflow-hidden bg-[#d4e6f1] font-['Noto_Sans_CJK_KR',sans-serif]">
      <TitleBar />
      <MenuBar />
      <Ribbon />
      <Toolbar />
      <WorkArea />
      <DocTabs />
      <StatusBar />
      <Taskbar />
      <Notepad />
      <Browser />
      <div className="absolute top-[773px] left-[1201px] leading-none font-light text-[#8f8f8f]/75">
        <Fit w={177} className="text-[21px] leading-[24px]">Windows 정품 인증</Fit>
        <Fit w={335} className="mt-[2px] text-[15px] leading-[20px]">[설정]으로 이동하여 Windows를 정품 인증합니다.</Fit>
      </div>
      <div className="absolute top-[840px] left-[1434px] flex h-[20px] w-[146px] items-center border border-[#777] bg-white pb-px pl-[5px] text-[12.500px] leading-none text-[#555] shadow-[3px_3px_2px_rgba(0,0,0,0.4)]">
        <Fit w={133}>2022년 7월 27일 수요일</Fit>
      </div>
    </div>
  );
}
